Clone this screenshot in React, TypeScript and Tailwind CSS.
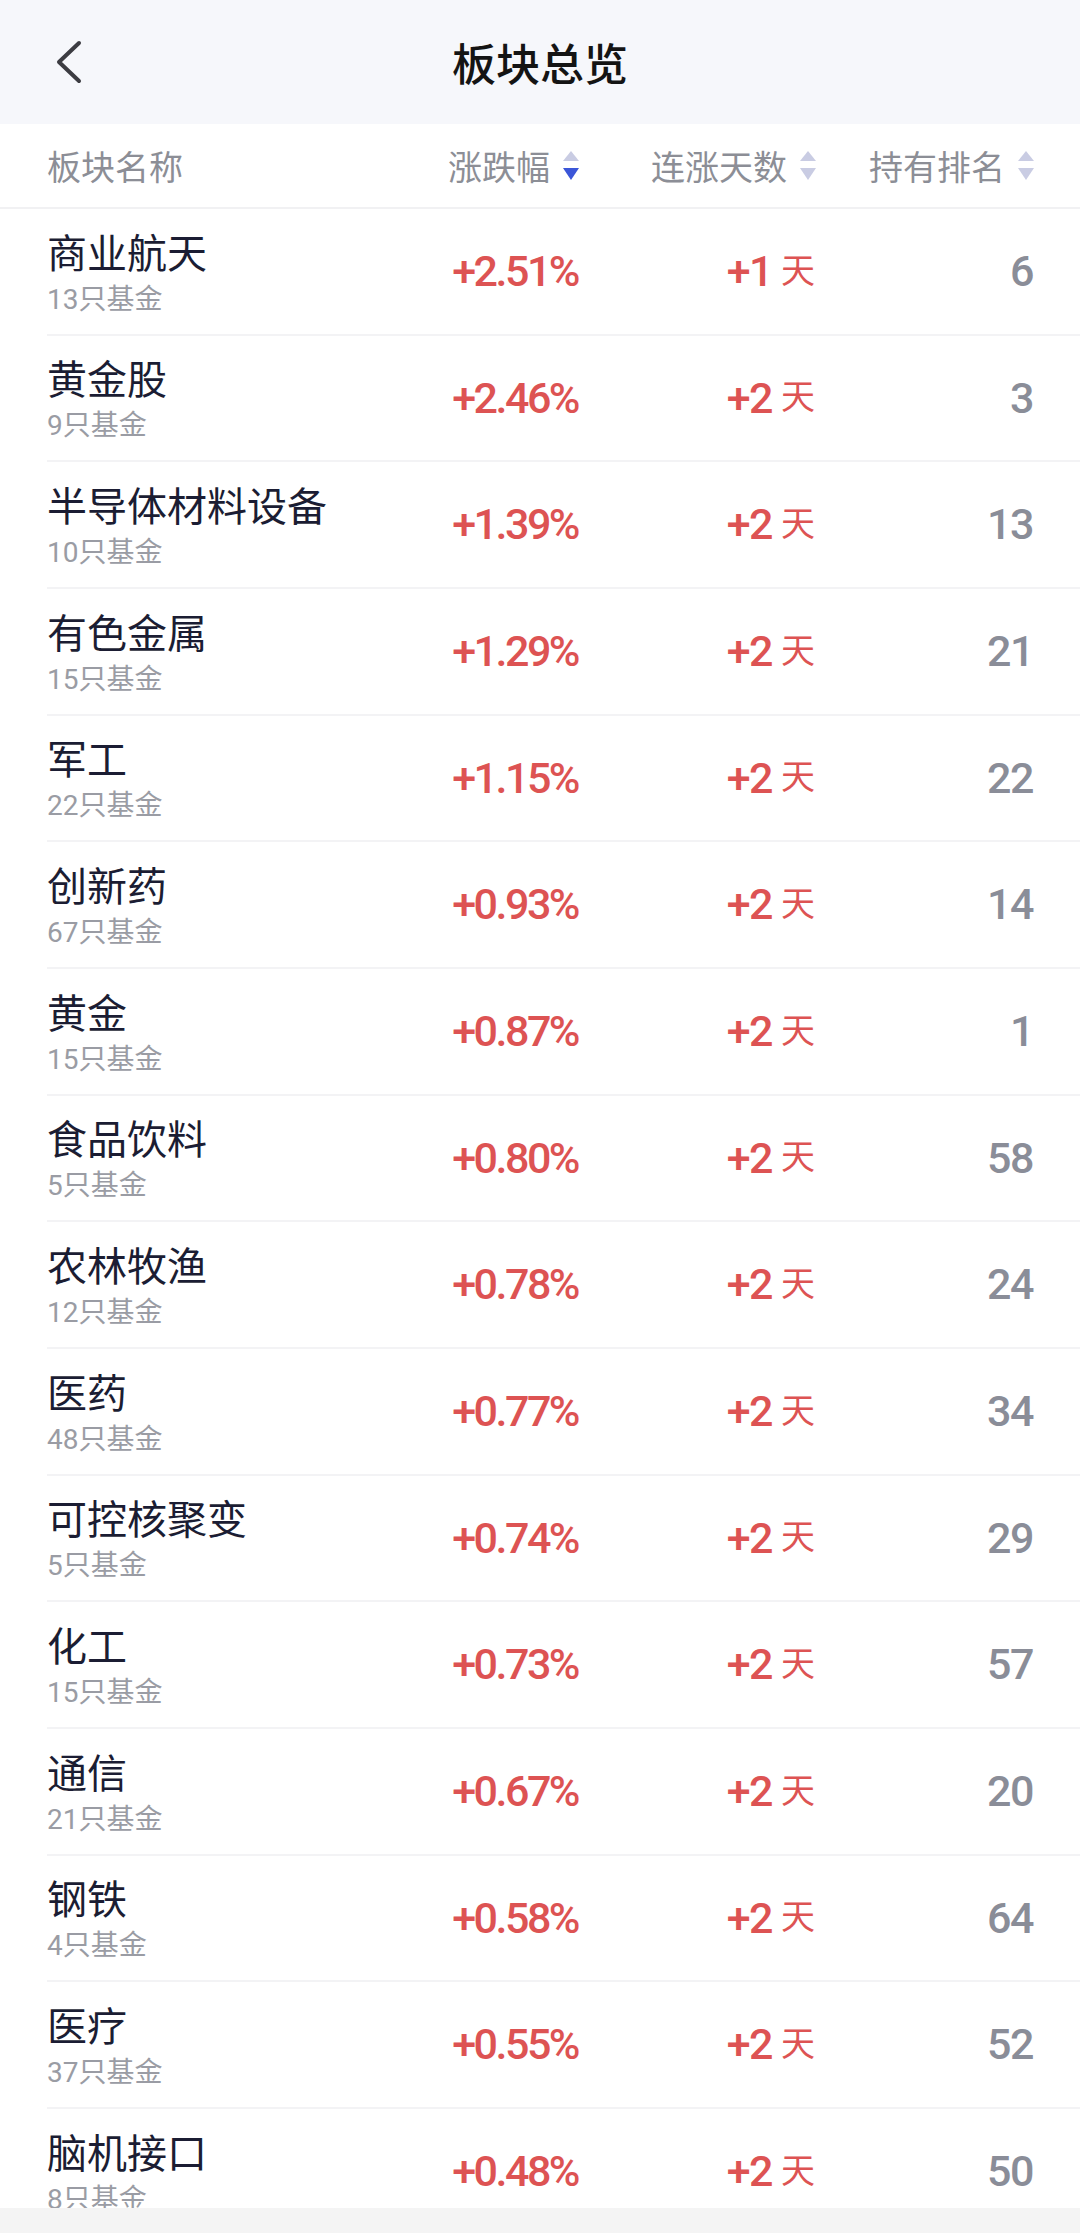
const SECTORS = [
  { name: '商业航天', funds: 13, change: '+2.51%', days: 1, rank: 6 },
  { name: '黄金股', funds: 9, change: '+2.46%', days: 2, rank: 3 },
  { name: '半导体材料设备', funds: 10, change: '+1.39%', days: 2, rank: 13 },
  { name: '有色金属', funds: 15, change: '+1.29%', days: 2, rank: 21 },
  { name: '军工', funds: 22, change: '+1.15%', days: 2, rank: 22 },
  { name: '创新药', funds: 67, change: '+0.93%', days: 2, rank: 14 },
  { name: '黄金', funds: 15, change: '+0.87%', days: 2, rank: 1 },
  { name: '食品饮料', funds: 5, change: '+0.80%', days: 2, rank: 58 },
  { name: '农林牧渔', funds: 12, change: '+0.78%', days: 2, rank: 24 },
  { name: '医药', funds: 48, change: '+0.77%', days: 2, rank: 34 },
  { name: '可控核聚变', funds: 5, change: '+0.74%', days: 2, rank: 29 },
  { name: '化工', funds: 15, change: '+0.73%', days: 2, rank: 57 },
  { name: '通信', funds: 21, change: '+0.67%', days: 2, rank: 20 },
  { name: '钢铁', funds: 4, change: '+0.58%', days: 2, rank: 64 },
  { name: '医疗', funds: 37, change: '+0.55%', days: 2, rank: 52 },
  { name: '脑机接口', funds: 8, change: '+0.48%', days: 2, rank: 50 },
];

const CJK = "font-['Noto_Sans_CJK_SC','Noto_Sans',sans-serif]";
const NUM = "font-['Roboto','Noto_Sans_CJK_SC',sans-serif]";

function SortIcon({ active }: { active?: boolean }) {
  return (
    <svg width="16" height="30" viewBox="0 0 16 30" className="shrink-0">
      <polygon points="8,0 16,10 0,10" fill="#c9cce3" />
      <polygon points="0,17 16,17 8,29" fill={active ? '#3b56d8' : '#c9cce3'} />
    </svg>
  );
}

function HeaderCell({ label, width, active }: { label: string; width: string; active?: boolean }) {
  return (
    <div className={`flex items-center justify-end gap-[13px] ${width}`}>
      <span>{label}</span>
      <SortIcon active={active} />
    </div>
  );
}

export default function App() {
  return (
    <div className={`flex h-[2233px] w-[1080px] flex-col overflow-hidden bg-white ${CJK}`}>
      {/* top bar */}
      <div className="relative flex h-[124px] shrink-0 items-center justify-center bg-[#f6f7fb]">
        <svg
          width="30"
          height="46"
          viewBox="0 0 30 46"
          className="absolute left-[54px] top-[39px]"
          fill="none"
          stroke="#3c3c42"
          strokeWidth="4"
          strokeLinecap="round"
          strokeLinejoin="round"
        >
          <polyline points="25,4 5,23 25,42" />
        </svg>
        <h1 className="text-[44px] font-medium text-[#141414]">板块总览</h1>
      </div>

      {/* table head */}
      <div className="flex h-[85px] shrink-0 items-center border-b-2 border-[#f1f1f3] pl-[47px] pr-[46px] text-[34px] text-[#8c8e96]">
        <div className="flex-1">板块名称</div>
        <HeaderCell label="涨跌幅" width="w-[200px]" active />
        <HeaderCell label="连涨天数" width="w-[237px]" />
        <HeaderCell label="持有排名" width="w-[218px]" />
      </div>

      {/* rows */}
      <div className="flex-1 overflow-hidden">
        {SECTORS.map((s) => (
          <div key={s.name} className="ml-[47px] flex h-[126.67px] items-center border-b-2 border-[#f3f3f5] pr-[47px]">
            <div className="flex flex-1 flex-col">
              <span className="text-[40px] leading-[54px] text-[#1b1d33]">{s.name}</span>
              <span className="text-[28px] leading-[38px] text-[#9a9ca4]">
                <span className={NUM}>{s.funds}</span>只基金
              </span>
            </div>
            <div className={`w-[200px] text-right text-[43px] font-medium tracking-[-2.5px] text-[#dd5353] ${NUM}`}>
              {s.change}
            </div>
            <div className="flex w-[237px] items-center justify-end gap-[9px] text-[#dd5353]">
              <span className={`text-[43px] font-medium tracking-[-1.5px] ${NUM}`}>+{s.days}</span>
              <span className="pb-[6px] text-[34px]">天</span>
            </div>
            <div className={`w-[218px] text-right text-[43px] font-medium tracking-[-1.5px] text-[#8a8d98] ${NUM}`}>
              {s.rank}
            </div>
          </div>
        ))}
      </div>

      {/* bottom bar */}
      <div className="h-[25px] shrink-0 bg-[#f4f4f4]" />
    </div>
  );
}
